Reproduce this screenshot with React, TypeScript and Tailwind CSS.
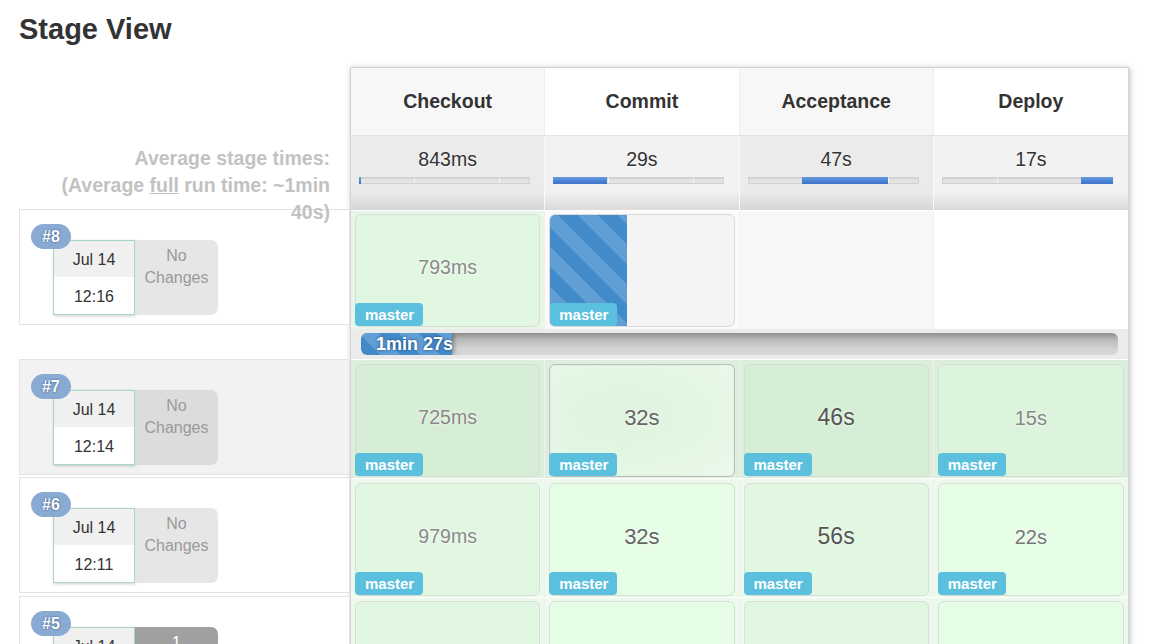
import React from "react";

type Cell =
  | { kind: "done"; text: string; txt: string; bg: string; hover?: boolean }
  | { kind: "progress" }
  | { kind: "empty" };

type Row = {
  n: number;
  date: string;
  time: string;
  leftBg: string;
  changesBg: string;
  changesText: React.ReactNode;
  changesTxt: string;
  pt: string;
  mb: string;
  wrap: string[];
  cells: Cell[];
};

const stages = ["Checkout", "Commit", "Acceptance", "Deploy"];
const headBg = ["bg-[#f7f7f7]", "bg-white", "bg-[#f7f7f7]", "bg-white"];
const avgBg = [
  "bg-[linear-gradient(to_bottom,#ebebeb_0%,#ebebeb_74%,#d6d6d6_100%)]",
  "bg-[linear-gradient(to_bottom,#f2f2f2_0%,#f2f2f2_74%,#dadada_100%)]",
  "bg-[linear-gradient(to_bottom,#ebebeb_0%,#ebebeb_74%,#d6d6d6_100%)]",
  "bg-[linear-gradient(to_bottom,#f2f2f2_0%,#f2f2f2_74%,#dadada_100%)]",
];
const avg = [
  { t: "843ms", from: 0, to: 2 },
  { t: "29s", from: 0, to: 54 },
  { t: "47s", from: 54, to: 140 },
  { t: "17s", from: 139, to: 171 },
];

const stripes =
  "bg-[repeating-linear-gradient(45deg,#428bca_0px,#428bca_14px,#609ed4_14px,#609ed4_28px)]";

const rows: Row[] = [
  {
    n: 8,
    date: "Jul 14",
    time: "12:16",
    leftBg: "bg-white",
    changesBg: "bg-[#e6e6e6]",
    changesText: (
      <>
        No
        <br />
        Changes
      </>
    ),
    changesTxt: "text-[#9a9a9a]",
    pt: "pt-[3px]",
    mb: "mb-[34px]",
    wrap: ["bg-[#e8f6e8]", "bg-[#fafafa]", "bg-[#f7f7f7]", "bg-white"],
    cells: [
      { kind: "done", text: "793ms", txt: "text-[19.5px] text-[#8a8a8a]", bg: "bg-[#e1f7e1]" },
      { kind: "progress" },
      { kind: "empty" },
      { kind: "empty" },
    ],
  },
  {
    n: 7,
    date: "Jul 14",
    time: "12:14",
    leftBg: "bg-[#f2f2f2]",
    changesBg: "bg-[#dcdcdc]",
    changesText: (
      <>
        No
        <br />
        Changes
      </>
    ),
    changesTxt: "text-[#9a9a9a]",
    pt: "pt-[4px]",
    mb: "mb-[2px]",
    wrap: ["bg-[#dcefdc]", "bg-[#dcefdc]", "bg-[#dcefdc]", "bg-[#dcefdc]"],
    cells: [
      { kind: "done", text: "725ms", txt: "text-[19.5px] text-[#888]", bg: "bg-[#d6edd6]" },
      {
        kind: "done",
        text: "32s",
        txt: "text-[22px] text-[#666]",
        bg: "bg-[radial-gradient(ellipse_at_40%_45%,#dff3df_0%,#e3f6e3_50%,#ebf9eb_100%)]",
        hover: true,
      },
      { kind: "done", text: "46s", txt: "text-[23px] text-[#555]", bg: "bg-[#d6edd6]" },
      { kind: "done", text: "15s", txt: "text-[20px] text-[#888]", bg: "bg-[#dcf3dc]" },
    ],
  },
  {
    n: 6,
    date: "Jul 14",
    time: "12:11",
    leftBg: "bg-white",
    changesBg: "bg-[#e6e6e6]",
    changesText: (
      <>
        No
        <br />
        Changes
      </>
    ),
    changesTxt: "text-[#9a9a9a]",
    pt: "pt-[4px]",
    mb: "mb-[3px]",
    wrap: ["bg-[#eef9ee]", "bg-[#eef9ee]", "bg-[#eef9ee]", "bg-[#eef9ee]"],
    cells: [
      { kind: "done", text: "979ms", txt: "text-[19.5px] text-[#8a8a8a]", bg: "bg-[#e1f7e1]" },
      { kind: "done", text: "32s", txt: "text-[22px] text-[#666]", bg: "bg-[#e6fde6]" },
      { kind: "done", text: "56s", txt: "text-[23px] text-[#555]", bg: "bg-[#e1f7e1]" },
      { kind: "done", text: "22s", txt: "text-[20px] text-[#777]", bg: "bg-[#e6fde6]" },
    ],
  },
  {
    n: 5,
    date: "Jul 14",
    time: "12:08",
    leftBg: "bg-white",
    changesBg: "bg-[#a0a0a0]",
    changesText: (
      <>
        1
        <br />
        commit
      </>
    ),
    changesTxt: "text-white",
    pt: "pt-[3px]",
    mb: "mb-[0px]",
    wrap: ["bg-[#eef9ee]", "bg-[#eef9ee]", "bg-[#eef9ee]", "bg-[#eef9ee]"],
    cells: [
      { kind: "done", text: "", txt: "text-[19px] text-[#888]", bg: "bg-[#e1f7e1]" },
      { kind: "done", text: "", txt: "text-[22px] text-[#666]", bg: "bg-[#e6fde6]" },
      { kind: "done", text: "", txt: "text-[23px] text-[#555]", bg: "bg-[#e1f7e1]" },
      { kind: "done", text: "", txt: "text-[20px] text-[#777]", bg: "bg-[#e6fde6]" },
    ],
  },
];

function Master() {
  return (
    <div className="absolute left-[-1px] bottom-[0px] h-[23px] w-[68px] rounded-[4px] bg-[#5bc0de] pl-[10px] text-[15px] font-bold leading-[23px] text-white">
      master
    </div>
  );
}

function StageCell({ cell }: { cell: Cell }) {
  if (cell.kind === "empty") return null;
  if (cell.kind === "progress") {
    return (
      <div className="relative flex h-[113px] overflow-hidden rounded-[6px] border border-[#dadada] bg-[#f4f4f4]">
        <div className={`h-full w-[77px] ${stripes}`} />
        <Master />
      </div>
    );
  }
  return (
    <div
      className={`relative flex h-[113px] items-center justify-center rounded-[6px] border pb-[6px] ${cell.bg} ${
        cell.hover ? "border-[#bdbdbd] shadow-[inset_0_0_2px_rgba(0,0,0,0.08)]" : "border-[#d6ded6]"
      }`}
    >
      <span className={`${cell.txt} [text-shadow:0_0_3px_#ffffff]`}>{cell.text}</span>
      <Master />
    </div>
  );
}

function LeftRow({ row }: { row: Row }) {
  return (
    <div className={`relative h-[116px] border border-[#e3e3e3] ${row.leftBg} ${row.mb} pl-[33px] pt-[30px]`}>
      <div className="absolute left-[11px] top-[14px] z-10 h-[25px] w-[40px] rounded-full bg-[#88aad3] text-center text-[16px] font-bold leading-[25px] text-white [text-shadow:0_0_2px_#2f4f78]">
        #{row.n}
      </div>
      <div className="flex">
        <div className="flex h-[75px] w-[82px] flex-col border border-[#a9d6c0] bg-white shadow-[1px_1px_3px_rgba(0,0,0,0.2)]">
          <div className="flex h-[36px] items-center justify-center bg-[#f0f0f0] pt-[2px] text-[16px] text-[#333]">
            {row.date}
          </div>
          <div className="flex flex-1 items-center justify-center pt-[2px] text-[16px] text-[#333]">{row.time}</div>
        </div>
        <div
          className={`h-[75px] w-[83px] rounded-r-[7px] pt-[5px] text-center text-[16px] leading-[22px] ${row.changesBg} ${row.changesTxt}`}
        >
          {row.changesText}
        </div>
      </div>
    </div>
  );
}

function AvgBar({ from, to }: { from: number; to: number }) {
  return (
    <div className="relative ml-[8px] h-[7px] w-[171px] border border-[#d2d2d2] bg-[#e3e3e3] shadow-[inset_0_1px_1px_rgba(0,0,0,0.08)]">
      <div className="absolute left-[54px] top-0 h-full w-px bg-[#f4f4f4]" />
      <div className="absolute left-[139px] top-0 h-full w-px bg-[#f4f4f4]" />
      <div
        className="absolute top-[-1px] h-[7px] bg-[linear-gradient(to_bottom,#6b9be0_0%,#4a80d4_60%,#3f74c6_100%)]"
        style={{ left: from - 1, width: to - from }}
      />
    </div>
  );
}

export default function App() {
  return (
    <div className="h-[644px] w-[1149px] overflow-hidden bg-white font-['Liberation_Sans',Arial,sans-serif]">
      <h2 className="pl-[19px] pt-[12px] text-[29px] font-bold leading-[34px] text-[#333]">Stage View</h2>
      <div className="mt-[21px] flex">
        {/* left column */}
        <div className="ml-[19px] w-[331px]">
          <div className="h-[68px]" />
          <div className="relative z-10 h-[74px] pr-[20px] pt-[10px] text-right text-[19.5px] font-bold leading-[27px] text-[#c2c2c2]">
            Average stage times:
            <br />
            (Average <span className="underline">full</span> run time: ~1min
            <br />
            40s)
          </div>
          {rows.map((r) => (
            <LeftRow key={r.n} row={r} />
          ))}
        </div>

        {/* stage table */}
        <div className="w-[779px] border border-[#d4d4d4] bg-white shadow-[1px_1px_6px_rgba(0,0,0,0.25)]">
          <div className="grid h-[67px] grid-cols-4">
            {stages.map((s, i) => (
              <div
                key={s}
                className={`flex items-center justify-center text-[19.5px] font-bold text-[#333] ${headBg[i]} ${
                  i < 3 ? "border-r border-[#ececec]" : ""
                }`}
              >
                {s}
              </div>
            ))}
          </div>
          <div className="grid h-[75px] grid-cols-4 border-t border-[#e2e2e2]">
            {avg.map((a, i) => (
              <div
                key={i}
                className={`pt-[10px] ${avgBg[i]} ${i < 3 ? "border-r border-[#f8f8f8]" : ""}`}
              >
                <div className="h-[26px] text-center text-[19.5px] leading-[26px] text-[#333] [text-shadow:0_1px_1px_#ffffff]">
                  {a.t}
                </div>
                <div className="mt-[5px]">
                  <AvgBar from={a.from} to={a.to} />
                </div>
              </div>
            ))}
          </div>

          {rows.map((r, ri) => (
            <React.Fragment key={r.n}>
              <div className="grid h-[119px] grid-cols-4 border-t border-white">
                {r.cells.map((c, i) => (
                  <div
                    key={i}
                    className={`px-[4px] ${r.pt} ${r.wrap[i]} ${i < 3 ? "border-r border-[#f0f0f0]" : ""}`}
                  >
                    <StageCell cell={c} />
                  </div>
                ))}
              </div>
              {ri === 0 && (
                <div className="h-[30px] bg-[#ebebeb] px-[10px] pt-[4px]">
                  <div className="relative h-[22px] overflow-hidden rounded-[6px] bg-[linear-gradient(to_bottom,#8f8f8f_0%,#b9b9b9_30%,#d2d2d2_70%,#d6d6d6_100%)]">
                    <div
                      className={`h-full w-[91px] overflow-hidden whitespace-nowrap rounded-l-[6px] pl-[15px] text-[18px] font-bold leading-[22px] text-white [text-shadow:0_0_3px_#1d3f6e] shadow-[2px_0_4px_rgba(0,0,0,0.35)] ${stripes}`}
                    >
                      1min 27s
                    </div>
                  </div>
                </div>
              )}
            </React.Fragment>
          ))}
        </div>
      </div>
    </div>
  );
}
